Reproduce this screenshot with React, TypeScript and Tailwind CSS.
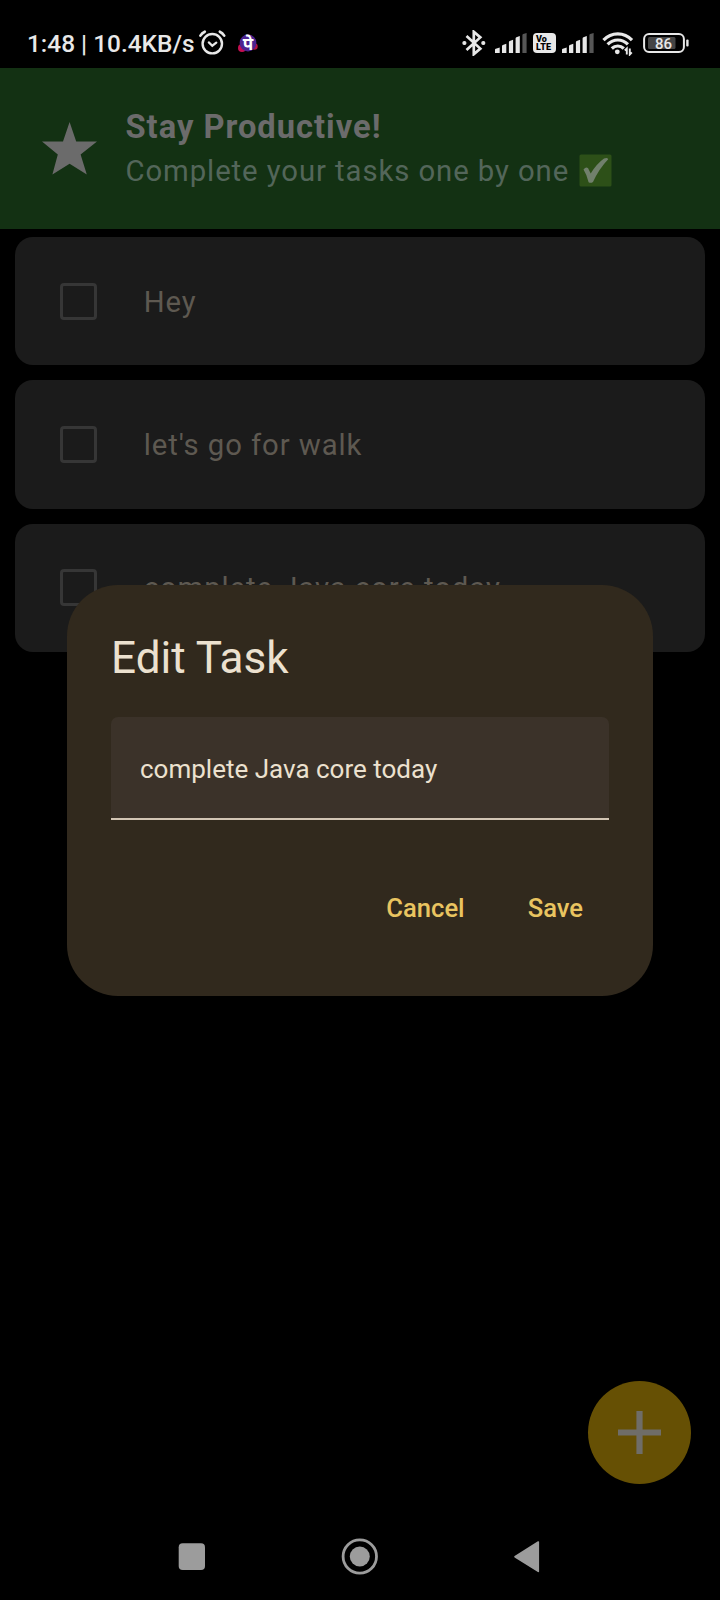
import React from "react";

function Signal({ className }: { className: string }) {
  return (
    <svg className={className} width="32" height="20" viewBox="0 0 32 20" fill="#e8e8e8">
      <path d="M0 20v-3.2q0-.8.8-1l3.9-1.4V20z" />
      <path d="M7 20v-7q0-.8.8-1.1l3.5-1.2V20z" />
      <path d="M13.9 20V9.2q0-.8.8-1.1L18.1 6.8V20z" />
      <path d="M20.6 20V5.4q0-.8.8-1.1L24.8 3V20z" />
      <path d="M27.4 20V2q0-.8.8-1.1L31.6 0v20z" fill="#565656" />
    </svg>
  );
}

function StatusBar() {
  return (
    <div className="relative flex h-[68px] shrink-0 items-center bg-black pt-[18px] text-[#e8e8e8]">
      <span className="ml-[27px] w-[167px] whitespace-nowrap pt-[2px] text-[24.4px] font-medium leading-[28px]">
        1:48 | 10.4KB/s
      </span>
      <svg className="ml-[4px]" width="28" height="26" viewBox="0 0 28 26" fill="none" stroke="#e8e8e8" strokeLinecap="round">
        <circle cx="14.3" cy="13.7" r="9.7" strokeWidth="2.4" />
        <path d="M10.8 12.4l3.5 3.3 4-3.1" strokeWidth="2.2" />
        <path d="M2.4 5.6q1.6-2.6 4.4-3.9M26.2 5.6q-1.6-2.6-4.4-3.9" strokeWidth="2.6" />
      </svg>
      <div className="relative ml-[11px] mt-[1px] h-[22px] w-[22px]">
        <svg width="22" height="22" viewBox="0 0 22 22">
          <circle cx="5" cy="15" r="4" fill="#c40f50" />
          <circle cx="17.5" cy="13.5" r="3.2" fill="#b5123f" />
          <circle cx="11" cy="10" r="8.4" fill="#4c2390" />
        </svg>
        <span className="absolute inset-0 text-center text-[17px] font-bold leading-[23px] text-white">पे</span>
      </div>
      <div className="flex-1" />
      <svg width="24" height="26" viewBox="0 0 24 26" fill="none" stroke="#e8e8e8" strokeWidth="2.7">
        <path d="M4.5 6l13.8 12.6-6.5 5.6V1.8L18.3 7.4 4.5 20" />
        <circle cx="2.4" cy="13" r="1.5" fill="#e8e8e8" strokeWidth="1.2" />
        <circle cx="21.3" cy="13" r="1.5" fill="#e8e8e8" strokeWidth="1.2" />
      </svg>
      <Signal className="ml-[9px]" />
      <div className="ml-[6px] flex h-[20px] w-[23px] flex-col items-start justify-center rounded-[4px] bg-[#e8e8e8] pl-[3px] text-[9px] font-black leading-[8px] text-black">
        <span>Vo</span>
        <span className="tracking-[0.2px]">LTE</span>
      </div>
      <Signal className="ml-[6px]" />
      <svg className="ml-[8px]" width="32" height="25" viewBox="0 0 32 25" fill="none" stroke="#e8e8e8" strokeWidth="3.2">
        <path d="M1.5 9.2q6-6.3 14.3-6.3T30 9.2" />
        <path d="M5.6 13.4q4.5-4.4 10.2-4.4t10.1 4.4" />
        <path d="M9.8 17.5q2.6-2.5 6-2.5t6 2.5" />
        <circle cx="15.3" cy="20.8" r="2.4" fill="#e8e8e8" stroke="none" />
        <path d="M24.8 23.5v-6l-2 2M27.8 17.5v6l2-2.2" strokeWidth="1.9" />
      </svg>
      <div className="relative ml-[9px] mr-[30px] h-[20px] w-[47px]">
        <svg width="47" height="20" viewBox="0 0 47 20">
          <rect x="1.1" y="1.1" width="39.8" height="17.8" rx="5" fill="none" stroke="#e8e8e8" strokeWidth="2" />
          <rect x="5" y="4" width="27.5" height="12" rx="1.5" fill="#444" />
          <rect x="43.2" y="6.5" width="2.4" height="7" rx="1" fill="#e8e8e8" />
        </svg>
        <span className="absolute left-0 top-px w-[41px] text-center text-[15px] font-medium leading-[20px]">86</span>
      </div>
    </div>
  );
}

function Header() {
  return (
    <div className="flex h-[161px] shrink-0 items-center bg-[#133113] pl-[42px]">
      <svg className="mt-[2px]" width="55" height="55" viewBox="0 0 55 55" fill="#6b6b6b">
        <path d="M27.6 0l6.6 19.5H55L38.6 32.4l6.2 20.1-17.2-10.8-17.2 10.8 5.4-20.1L0 19.5h21z" />
      </svg>
      <div className="ml-[28.5px] flex flex-col whitespace-nowrap pt-[2px]">
        <span className="h-[43px] text-[32.7px] font-bold leading-[43px] tracking-[0.98px] text-[#6b6b6b]">Stay Productive!</span>
        <div className="flex h-[44px] items-center">
          <span className="text-[29.3px] leading-[44px] tracking-[0.92px] text-[#53665a]">Complete your tasks one by one</span>
          <svg className="mb-[1px] ml-[9.5px]" width="33" height="33" viewBox="0 0 33 33" role="img" aria-label="done">
            <rect x=".5" y=".5" width="32" height="32" rx="1.5" fill="#2d5018" />
            <path d="M4.5 15.5q2.6-3.4 4.6-1.2l2.6 5.2Q17.8 9.7 25 4.6q3.2-1.6 4.2.6Q19.8 15 14 28q-2.4 1.6-4.4.2Q8 21 4.5 15.5z" fill="#71806c" />
          </svg>
        </div>
      </div>
    </div>
  );
}

function TaskCard({ text }: { text: string }) {
  return (
    <div className="flex h-[128.4px] items-center rounded-[18px] bg-[#1b1b1b] pl-[45.4px]">
      <div className="h-[37px] w-[37px] rounded-[4px] border-[3px] border-[#363636]" />
      <span className="ml-[46.3px] whitespace-nowrap pt-[1px] text-[29.3px] leading-[44px] tracking-[0.92px] text-[#5e5951]">{text}</span>
    </div>
  );
}

function EditDialog() {
  return (
    <div className="absolute left-[67px] top-[585px] flex h-[411px] w-[586px] flex-col rounded-[51px] bg-[#31291d] px-[44px] pt-[44px]">
      <h1 className="h-[58px] text-[44.1px] leading-[58px] text-[#ece1cf]">Edit Task</h1>
      <div className="mt-[30px] flex h-[103px] items-center rounded-t-[7px] border-b-2 border-[#d2c5b4] bg-[#3b3229] pl-[29px]">
        <span className="whitespace-nowrap pt-[2px] text-[26px] leading-[36px] text-[#ece1cf]">complete Java core today</span>
      </div>
      <div className="mt-[69px] flex justify-end gap-[63px] pr-[26px] text-[25.6px] font-medium leading-[38px] text-[#e9c460]">
        <button>Cancel</button>
        <button>Save</button>
      </div>
    </div>
  );
}

export default function App() {
  return (
    <div className="relative flex h-[1600px] w-[720px] flex-col overflow-hidden bg-black font-[Roboto,'Noto_Sans',sans-serif]">
      <StatusBar />
      <Header />
      <div className="flex flex-1 flex-col gap-[14.9px] px-[15px] pt-[8px]">
        <TaskCard text="Hey" />
        <TaskCard text="let's go for walk" />
        <TaskCard text="complete Java core today" />
      </div>
      <div className="flex justify-end pr-[29px]">
        <button className="flex h-[103px] w-[103px] items-center justify-center rounded-full bg-[#665004]">
          <svg width="43" height="43" viewBox="0 0 43 43" fill="#6f6d68">
            <path d="M18.4 0h6.2v18.4H43v6.2H24.6V43h-6.2V24.6H0v-6.2h18.4z" />
          </svg>
        </button>
      </div>
      <div className="flex h-[116px] shrink-0 pt-[54px]">
        <svg width="720" height="38" viewBox="0 0 720 38" fill="#9c9c9c">
          <rect x="178.7" y="5.3" width="26.3" height="26.7" rx="4" />
          <circle cx="359.8" cy="18.5" r="16.7" fill="none" stroke="#9c9c9c" strokeWidth="2.8" />
          <circle cx="359.8" cy="18.5" r="10" />
          <path d="M515 18.7L538.3 4v29.4z" stroke="#9c9c9c" strokeWidth="1.6" strokeLinejoin="round" />
        </svg>
      </div>
      <EditDialog />
    </div>
  );
}
